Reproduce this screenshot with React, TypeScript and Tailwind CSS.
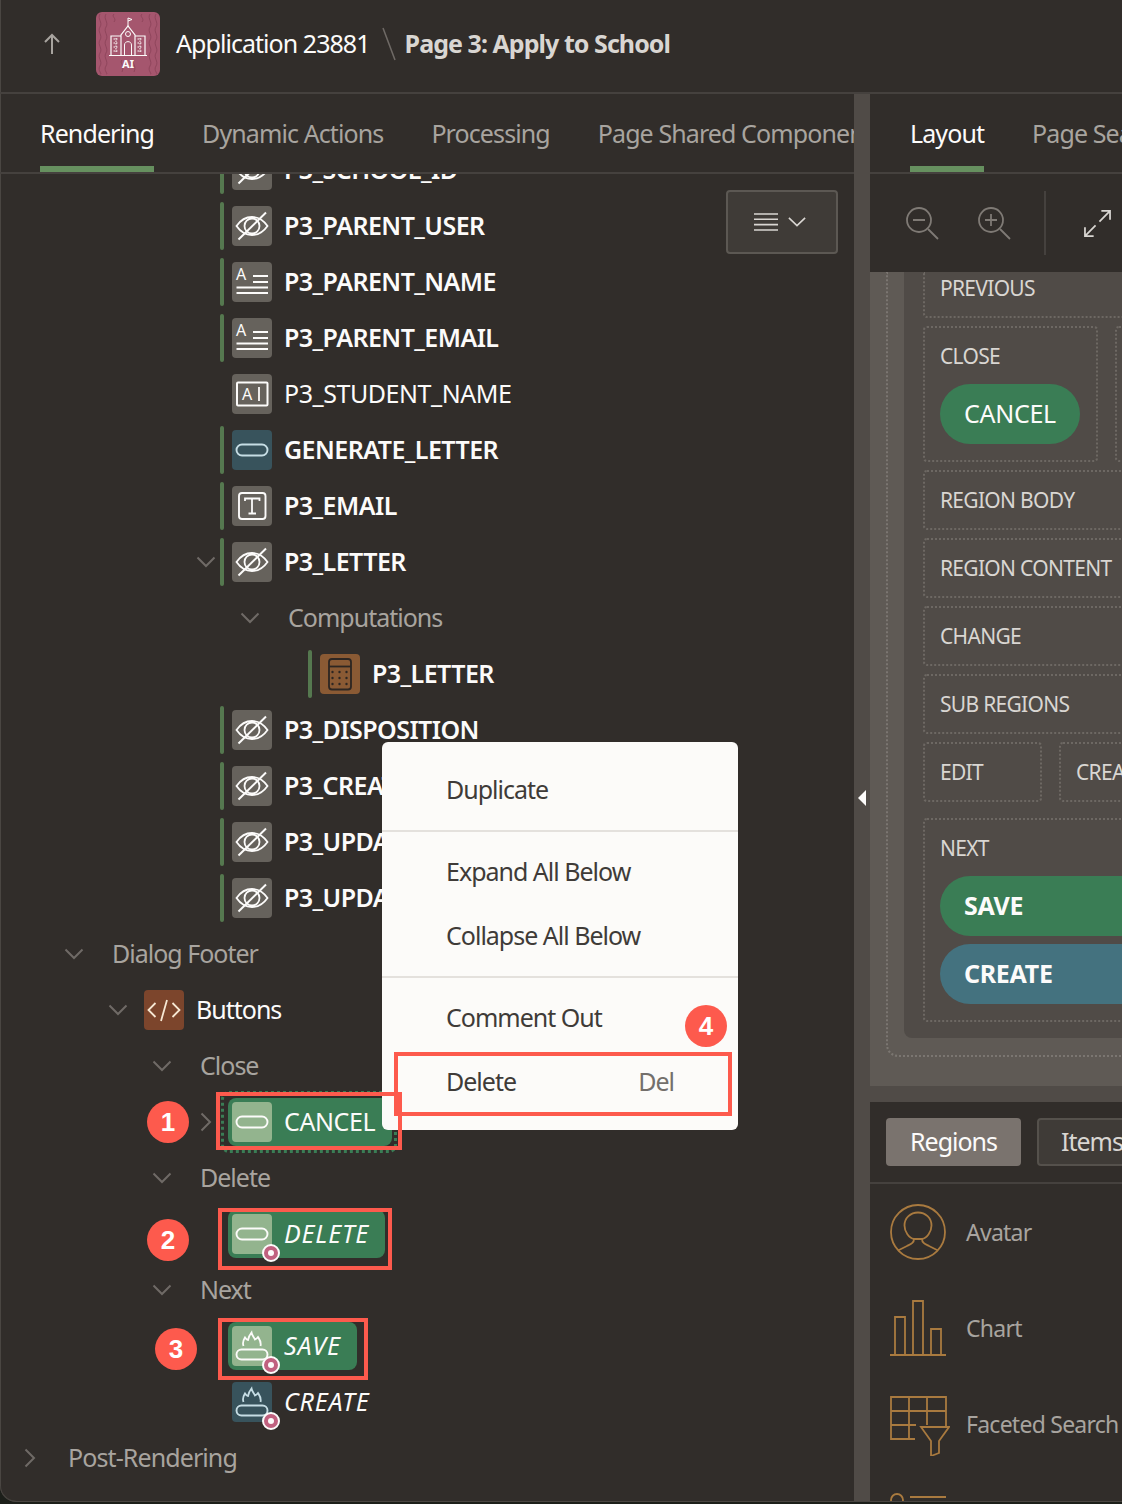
import type { ReactNode } from "react";

const font = "[font-family:'Noto_Sans',sans-serif]";

function Svg({ children, className = "w-10 h-10" }: { children: ReactNode; className?: string }) {
  return (
    <svg viewBox="0 0 40 40" fill="none" stroke="currentColor" strokeWidth="1.8" className={className}>
      {children}
    </svg>
  );
}

function EyeOff() {
  return (
    <Svg>
      <path d="M4.500 20C9 13.500 14 11 20 11s11 2.500 15.500 9C31 26.500 26 29 20 29S9 26.500 4.500 20Z" />
      <circle cx="20" cy="20" r="7.500" />
      <path d="M6.500 33.500 34 6.500" strokeWidth="2" />
    </Svg>
  );
}

function TextAreaIcon() {
  return (
    <Svg>
      <text x="4" y="18" fontSize="16" fill="currentColor" stroke="none" fontFamily="Noto Sans">A</text>
      <path d="M21 14h15M21 20h15M4.500 25.500H36M4.500 31H36" strokeWidth="2" />
    </Svg>
  );
}

function DisplayIcon() {
  return (
    <Svg>
      <rect x="5" y="8.500" width="30.500" height="23" rx="1" strokeWidth="2" />
      <text x="10" y="26" fontSize="16" fill="currentColor" stroke="none" fontFamily="Noto Sans">A</text>
      <path d="M27 13v14" />
    </Svg>
  );
}

function ButtonIcon() {
  return (
    <Svg>
      <rect x="4.500" y="14.500" width="31" height="11" rx="5.500" strokeWidth="1.900" />
    </Svg>
  );
}

function HotButtonIcon() {
  return (
    <Svg>
      <rect x="4.500" y="23.500" width="31" height="10" rx="5" strokeWidth="1.900" />
      <path d="M11.500 20C10 16 11.500 14 13 11.500c1 1.500 2 2.500 3 2.500.500-3 1.500-5 3.500-7.500.500 3 2.500 5 3.500 7 1.200-.500 2.200-1.500 3-2.500 2 3 3.500 5 2.500 9" />
    </Svg>
  );
}

function TextFieldIcon() {
  return (
    <Svg>
      <rect x="7" y="7" width="26.500" height="26" rx="3" strokeWidth="1.900" />
      <path d="M13 15v-2.500h14.500V15M20 12.500V27M16.500 27.500h7.500" />
    </Svg>
  );
}

function CalculatorIcon() {
  return (
    <svg viewBox="0 0 40 40" className="w-10 h-10" fill="none" stroke="#2d2622" strokeWidth="1.800">
      <rect x="9" y="5" width="22" height="30.500" rx="3" />
      <path d="M9 12.500h22" />
      <g fill="#2d2622" stroke="none">
        {[12.5, 19.5, 26.5].map((x) =>
          [18, 24, 30].map((y) => <circle key={`${x}-${y}`} cx={x} cy={y} r="1.200" />),
        )}
      </g>
    </svg>
  );
}

function CodeIcon() {
  return (
    <Svg>
      <path d="M11.500 13 4.500 20l7 7M28.500 13l7 7-7 7M23 10l-6 21" strokeWidth="1.800" />
    </Svg>
  );
}

function ChevronDown() {
  return (
    <svg viewBox="0 0 20 12" className="w-5 h-3" fill="none" stroke="#6f6a66" strokeWidth="2">
      <path d="M1.500 1.500 10 10l8.500-8.500" />
    </svg>
  );
}

function ChevronRight() {
  return (
    <svg viewBox="0 0 12 20" className="w-3 h-5" fill="none" stroke="#6f6a66" strokeWidth="2">
      <path d="M1.500 1.500 10 10l-8.500 8.500" />
    </svg>
  );
}

function Marker() {
  return (
    <span className="absolute -right-2 -bottom-2 w-[18px] h-[18px] rounded-full bg-[#c0617f] border-2 border-[#fcfbfa] flex items-center justify-center">
      <span className="w-[6px] h-[6px] rounded-full bg-[#fcfbfa]" />
    </span>
  );
}

const grey = "bg-[#66625c] text-[#fcfbfa]";
const teal = "bg-[#38535c] text-[#c6dde4]";
const sage = "bg-[#93b48e] text-[#fcfbfa]";

function Bar({ hidden }: { hidden?: boolean }) {
  return <span className={`w-1 h-12 rounded-sm mr-2 ml-0.5 ${hidden ? "" : "bg-[#55784f]"}`} />;
}

function Chevron({ open }: { open?: boolean }) {
  return (
    <span className="w-6 flex justify-center">
      {open === undefined ? null : open ? <ChevronDown /> : <ChevronRight />}
    </span>
  );
}

function Item({
  icon,
  tone = grey,
  label,
  light,
  open,
  indent = "pl-[194px]",
}: {
  icon: ReactNode;
  tone?: string;
  label: string;
  light?: boolean;
  open?: boolean;
  indent?: string;
}) {
  return (
    <div className={`h-14 flex items-center shrink-0 ${indent}`}>
      <Chevron open={open} />
      <Bar hidden={light} />
      <span className={`w-10 h-10 rounded ${tone} flex items-center justify-center`}>{icon}</span>
      <span className={`ml-3 text-[25px] text-[#fcfbfa] ${light ? "tracking-[-0.45px]" : "font-semibold tracking-[-0.55px]"}`}>{label}</span>
    </div>
  );
}

function Group({ label, open = true, indent }: { label: string; open?: boolean; indent: string }) {
  return (
    <div className={`h-14 flex items-center shrink-0 ${indent}`}>
      <Chevron open={open} />
      <span className="ml-[26px] text-[25px] tracking-[-1px] text-[#a8a49f]">{label}</span>
    </div>
  );
}

function ButtonRow({
  label,
  icon,
  tone = sage,
  pill,
  marker,
}: {
  label: string;
  icon: ReactNode;
  tone?: string;
  pill?: string;
  marker?: boolean;
}) {
  return (
    <div className="h-14 flex items-center shrink-0 pl-[194px]">
      <Chevron />
      <div className={`ml-2.5 h-12 pl-1 flex items-center rounded-lg ${pill ?? ""}`}>
        <span className={`relative w-10 h-10 rounded ${tone} flex items-center justify-center`}>
          {icon}
          {marker && <Marker />}
        </span>
        <span className="ml-3 text-[25px] tracking-[0.9px] italic text-[#fcfbfa]">{label}</span>
      </div>
    </div>
  );
}

function Tabs({ items, active }: { items: string[]; active: string }) {
  return (
    <div className="h-[80px] shrink-0 border-b-2 border-[#45413e] flex gap-12 pl-10 overflow-hidden whitespace-nowrap">
      {items.map((t) => (
        <div
          key={t}
          className={`h-[78px] pt-[22px] border-b-[6px] text-[25px] leading-[34px] tracking-[-0.9px] ${
            t === active ? "border-[#66905f] text-[#fcfbfa]" : "border-transparent text-[#a8a49f]"
          }`}
        >
          {t}
        </div>
      ))}
    </div>
  );
}

function Slot({ label, className = "" }: { label: string; className?: string }) {
  return (
    <div className={`border-2 border-dotted border-[#6d6863] rounded pl-[15px] pt-0.5 text-[21px] tracking-[-0.7px] text-[#d9d6d2] flex items-center shrink-0 ${className}`}>
      {label}
    </div>
  );
}

function Callout({ n, className }: { n: number; className: string }) {
  return (
    <div className={`absolute w-[42px] h-[42px] rounded-full bg-[#fd5a4d] text-white text-[26px] font-semibold flex items-center justify-center [font-family:'Liberation_Sans',sans-serif] ${className}`}>
      {n}
    </div>
  );
}

function RedBox({ className }: { className: string }) {
  return <div className={`absolute border-4 border-[#fd5a4d] ${className}`} />;
}

function MenuItem({ label, hint }: { label: string; hint?: string }) {
  return (
    <div className="h-16 pl-16 pr-[64px] flex items-center justify-between text-[25px] tracking-[-1px] text-[#3f3b38]">
      <span>{label}</span>
      {hint && <span className="text-[#736f6b]">{hint}</span>}
    </div>
  );
}

function PaletteRow({ icon, label }: { icon: ReactNode; label: string }) {
  return (
    <div className="h-24 shrink-0 flex items-center gap-5 pl-5 text-[#a97a3f]">
      {icon}
      <span className="text-[23px] tracking-[-0.75px] text-[#a8a49f] whitespace-nowrap">{label}</span>
    </div>
  );
}

function Logo() {
  return (
    <svg viewBox="0 0 64 64" className="w-16 h-16 rounded-md bg-[#a5566e] shrink-0" fill="none" stroke="#fcfbfa" strokeWidth="1">
      <path
        d="M4 2c-3 5 3 8 0 13s3 8 0 13 3 8 0 13 3 8 0 13 3 8 0 8M10 2c-3 5 3 8 0 13s3 8 0 13 3 8 0 13 3 8 0 13 3 8 0 8M54 2c-3 5 3 8 0 13s3 8 0 13 3 8 0 13 3 8 0 13 3 8 0 8M60 2c-3 5 3 8 0 13s3 8 0 13 3 8 0 13 3 8 0 13 3 8 0 8M18 2c-3 3 3 4 0 8M26 48c-3 3 3 5 0 12M38 48c-3 3 3 5 0 12M46 2c-3 3 3 4 0 8"
        stroke="#8f465c"
      />
      <path d="M32 14V6l4 1.500-4 1.500" />
      <path d="M25 43V23l7-9 7 9v20M15 43V24h10M49 43V24H39M13 43.500h38" strokeWidth="1.200" />
      <circle cx="32" cy="22" r="2.500" />
      <path d="M28.500 43V33c0-4.500 7-4.500 7 0v10" />
      <path d="M17.500 27h5M17.500 31h5M17.500 35h5M17.500 39h5M41.500 27h5M41.500 31h5M41.500 35h5M41.500 39h5M20 26v15M44 26v15" strokeDasharray="1.500 1" />
      <text x="32" y="56" fontSize="11" fontWeight="700" fill="#fcfbfa" stroke="none" textAnchor="middle" fontFamily="Noto Sans">AI</text>
    </svg>
  );
}

function ZoomIcon({ plus }: { plus?: boolean }) {
  return (
    <svg viewBox="0 0 34 34" className="w-[34px] h-[34px]" fill="none" stroke="#7f7a75" strokeWidth="1.800">
      <circle cx="14" cy="14" r="12" />
      <path d="m23 23 10 10M8 14h12" />
      {plus && <path d="M14 8v12" />}
    </svg>
  );
}

export default function App() {
  return (
    <div className={`relative w-[1122px] h-[1504px] bg-[#1c1f1a] overflow-hidden ${font}`}>
      <div className="h-[1502px] bg-[#312d2a] rounded-bl-2xl shadow-[inset_1px_0_0_#4a4642] border-b border-[#4a4642] flex flex-col overflow-hidden">
        {/* top bar */}
        <header className="h-[94px] shrink-0 border-b-2 border-[#45413e] flex items-center pl-10 pb-1 text-[25px]">
          <svg viewBox="0 0 24 24" className="w-6 h-6" fill="none" stroke="#a8a49f" strokeWidth="2">
            <path d="M12 22V3M5 10l7-7 7 7" />
          </svg>
          <div className="ml-8">
            <Logo />
          </div>
          <span className="ml-4 tracking-[-0.95px] text-[#fcfbfa]">Application 23881</span>
          <svg viewBox="0 0 14 34" className="w-[14px] h-[34px] ml-3" stroke="#6f6a66" strokeWidth="1.500">
            <path d="M1 1l12 32" />
          </svg>
          <span className="ml-[9px] font-bold tracking-[-0.95px] text-[#d9d6d2]">Page 3: Apply to School</span>
        </header>

        <div className="flex-1 flex min-h-0">
          {/* tree */}
          <section className="w-[854px] flex flex-col min-w-0">
            <Tabs items={["Rendering", "Dynamic Actions", "Processing", "Page Shared Components"]} active="Rendering" />
            <div className="relative flex-1 overflow-hidden">
              <div className="-mt-8 flex flex-col">
                <Item icon={<EyeOff />} label="P3_SCHOOL_ID" />
                <Item icon={<EyeOff />} label="P3_PARENT_USER" />
                <Item icon={<TextAreaIcon />} label="P3_PARENT_NAME" />
                <Item icon={<TextAreaIcon />} label="P3_PARENT_EMAIL" />
                <Item icon={<DisplayIcon />} label="P3_STUDENT_NAME" light />
                <Item icon={<ButtonIcon />} tone={teal} label="GENERATE_LETTER" />
                <Item icon={<TextFieldIcon />} label="P3_EMAIL" />
                <Item icon={<EyeOff />} label="P3_LETTER" open />
                <Group label="Computations" indent="pl-[238px]" />
                <Item icon={<CalculatorIcon />} tone="bg-[#8a5a34]" label="P3_LETTER" indent="pl-[282px]" />
                <Item icon={<EyeOff />} label="P3_DISPOSITION" />
                <Item icon={<EyeOff />} label="P3_CREATED_BY" />
                <Item icon={<EyeOff />} label="P3_UPDATED_ON" />
                <Item icon={<EyeOff />} label="P3_UPDATED_BY" />
                <Group label="Dialog Footer" indent="pl-[62px]" />
                <div className="h-14 flex items-center shrink-0 pl-[106px]">
                  <Chevron open />
                  <span className="ml-[14px] w-10 h-10 rounded bg-[#7c452c] text-[#f6e7d3] flex items-center justify-center">
                    <CodeIcon />
                  </span>
                  <span className="ml-3 text-[25px] tracking-[-1px] text-[#fcfbfa]">Buttons</span>
                </div>
                <Group label="Close" indent="pl-[150px]" />
                <div className="h-14 flex items-center shrink-0 pl-[194px]">
                  <Chevron open={false} />
                  <div className="ml-[3px] h-[62px] w-[176px] border-[3px] border-dotted border-[#3a7d55] rounded-lg flex items-center pl-1">
                    <div className="h-12 w-[164px] shrink-0 pl-1 flex items-center rounded-lg bg-[#3a7d55]">
                      <span className={`w-10 h-10 rounded ${sage} flex items-center justify-center`}>
                        <ButtonIcon />
                      </span>
                      <span className="ml-3 text-[25px] tracking-[-0.4px] text-[#fcfbfa]">CANCEL</span>
                    </div>
                  </div>
                </div>
                <Group label="Delete" indent="pl-[150px]" />
                <ButtonRow label="DELETE" icon={<ButtonIcon />} marker pill="bg-[#3a7d55] w-[157px]" />
                <Group label="Next" indent="pl-[150px]" />
                <ButtonRow label="SAVE" icon={<HotButtonIcon />} marker pill="bg-[#3a7d55] w-[129px]" />
                <ButtonRow label="CREATE" icon={<HotButtonIcon />} tone={teal} marker />
                <div className="h-14 flex items-center shrink-0 pl-[18px]">
                  <Chevron open={false} />
                  <span className="ml-[26px] text-[25px] tracking-[-0.9px] text-[#a8a49f]">Post-Rendering</span>
                </div>
              </div>
              <button className="absolute left-[726px] top-4 w-28 h-16 pr-1 rounded border-2 border-[#5c5853] bg-[#3f3b37] flex items-center justify-center gap-2.5 text-[#d9d6d2]">
                <svg viewBox="0 0 24 20" className="w-6 h-5" stroke="currentColor" strokeWidth="1.600">
                  <path d="M0 2h24M0 7.300h24M0 12.600h24M0 18h24" />
                </svg>
                <svg viewBox="0 0 20 12" className="w-[18px] h-3" fill="none" stroke="currentColor" strokeWidth="1.800">
                  <path d="M1 1.500 10 10l9-8.500" />
                </svg>
              </button>
            </div>
          </section>

          {/* splitter */}
          <div className="w-4 shrink-0 bg-[#504b47] flex items-center pl-1">
            <span className="w-0 h-0 border-y-8 border-y-transparent border-r-8 border-r-[#fcfbfa]" />
          </div>

          {/* layout side */}
          <section className="flex-1 flex flex-col min-w-0 overflow-hidden">
            <Tabs items={["Layout", "Page Search"]} active="Layout" />
            <div className="h-[98px] shrink-0 flex items-center pl-[35px] text-[#d9d6d2]">
              <ZoomIcon />
              <div className="ml-[38px]">
                <ZoomIcon plus />
              </div>
              <span className="ml-[33px] w-0.5 h-16 bg-[#45413e]" />
              <svg viewBox="0 0 28 28" className="ml-[38px] w-[27px] h-[27px]" fill="none" stroke="currentColor" strokeWidth="1.800">
                <path d="M16 12 27 1M18 1h9v9M12 16 1 27M1 18v9h9" />
              </svg>
            </div>

            <div className="h-[814px] shrink-0 bg-[#5f5a55] pl-4 pb-[29px] overflow-hidden">
              <div className="w-[400px] h-full border-l-2 border-b-2 border-dotted border-[#7b7671] rounded-bl-xl pl-4 pb-[17px]">
                <div className="h-full bg-[#504b47] rounded-bl-lg pl-[19px] flex flex-col">
                  <Slot label="PREVIOUS" className="w-[360px] h-[46px] border-t-0 rounded-t-none !pb-[13px]" />
                  <div className="mt-2 flex gap-[17px] shrink-0">
                    <div className="w-[175px] h-[136px] border-2 border-dotted border-[#6d6863] rounded pl-[15px] pt-[14px]">
                      <div className="text-[21px] leading-7 tracking-[-0.7px] text-[#d9d6d2]">CLOSE</div>
                      <div className="mt-[14px] w-[140px] h-[60px] rounded-full bg-[#3a7d55] flex items-center justify-center text-[25px] tracking-[-0.3px] text-[#fcfbfa]">
                        CANCEL
                      </div>
                    </div>
                    <div className="w-[150px] h-[136px] border-2 border-dotted border-[#6d6863] rounded" />
                  </div>
                  <div className="mt-2 flex flex-col gap-2 shrink-0">
                    <Slot label="REGION BODY" className="w-[360px] h-[60px]" />
                    <Slot label="REGION CONTENT" className="w-[360px] h-[60px]" />
                    <Slot label="CHANGE" className="w-[360px] h-[60px]" />
                    <Slot label="SUB REGIONS" className="w-[360px] h-[60px]" />
                  </div>
                  <div className="mt-2 flex gap-[17px] shrink-0">
                    <Slot label="EDIT" className="w-[119px] h-[60px]" />
                    <Slot label="CREATE" className="w-[150px] h-[60px]" />
                  </div>
                  <div className="mt-4 w-[360px] h-[204px] border-2 border-dotted border-[#6d6863] rounded pl-[15px] pt-[14px] shrink-0">
                    <div className="text-[21px] leading-7 tracking-[-0.7px] text-[#d9d6d2]">NEXT</div>
                    <div className="mt-[14px] h-[60px] rounded-l-full bg-[#3a7d55] flex items-center pl-6 text-[25px] font-bold tracking-[-0.3px] text-[#fcfbfa]">
                      SAVE
                    </div>
                    <div className="mt-2 h-[60px] rounded-l-full bg-[#44727f] flex items-center pl-6 text-[25px] font-bold tracking-[-0.3px] text-[#fcfbfa]">
                      CREATE
                    </div>
                  </div>
                </div>
              </div>
            </div>

            <div className="h-4 shrink-0 bg-[#504b47]" />

            {/* palette */}
            <div className="h-[82px] shrink-0 border-b-2 border-[#45413e] flex items-center gap-4 pl-4 text-[25px] tracking-[-1px] whitespace-nowrap">
              <div className="w-[135px] h-12 shrink-0 rounded bg-[#7a736e] text-[#fcfbfa] flex items-center justify-center">Regions</div>
              <div className="w-[135px] h-12 shrink-0 rounded border-2 border-[#55514c] bg-[#3f3b37] text-[#d9d6d2] pl-[22px] flex items-center">Items</div>
            </div>
            <div className="flex flex-col flex-1 overflow-hidden">
              <PaletteRow
                label="Avatar"
                icon={
                  <svg viewBox="0 0 56 56" className="w-14 h-14 shrink-0" fill="none" stroke="currentColor" strokeWidth="1.800">
                    <circle cx="28" cy="28" r="27" />
                    <path d="M28 8.500c-7.500 0-13.500 5.500-13.500 13 0 6 4.500 13 9.500 13.500h8c5-.5 9.500-7.500 9.500-13.500 0-7.500-6-13-13.500-13Z" />
                    <path d="M24 35c0 4-3 5-7 7l-9 4.500M32 35c0 4 3 5 7 7l9 4.500" />
                  </svg>
                }
              />
              <PaletteRow
                label="Chart"
                icon={
                  <svg viewBox="0 0 56 56" className="w-14 h-14 shrink-0" fill="none" stroke="currentColor" strokeWidth="1.800">
                    <path d="M0 55h56M5 55V17h10v38M23 55V1h10v54M41 55V29h10v26" />
                  </svg>
                }
              />
              <PaletteRow
                label="Faceted Search"
                icon={
                  <svg viewBox="0 0 60 60" className="w-[60px] h-[60px] shrink-0 -mr-1 mt-1" fill="none" stroke="currentColor" strokeWidth="1.800">
                    <path d="M25 43H1V1h55v30M1 15h55M1 29h25M19 1v42M37 1v28" />
                    <path d="M31 31h28L49 45v12l-8 3V45Z" />
                  </svg>
                }
              />
              <PaletteRow
                label=""
                icon={
                  <svg viewBox="0 0 56 56" className="w-14 h-14 shrink-0" fill="none" stroke="currentColor" strokeWidth="1.800">
                    <circle cx="7" cy="8" r="6" />
                    <path d="M20 5h36" />
                  </svg>
                }
              />
            </div>
          </section>
        </div>
      </div>

      {/* context menu */}
      <div className="absolute left-[382px] top-[742px] w-[356px] h-[388px] rounded-md bg-[#fcfbf9] py-4">
        <MenuItem label="Duplicate" />
        <div className="my-2 h-0.5 bg-[#e4e1dd]" />
        <MenuItem label="Expand All Below" />
        <MenuItem label="Collapse All Below" />
        <div className="my-2 h-0.5 bg-[#e4e1dd]" />
        <MenuItem label="Comment Out" />
        <MenuItem label="Delete" hint="Del" />
      </div>

      {/* annotations */}
      <RedBox className="left-[216px] top-[1092px] w-[186px] h-[58px]" />
      <RedBox className="left-[218px] top-[1208px] w-[174px] h-[62px]" />
      <RedBox className="left-[218px] top-[1318px] w-[150px] h-[62px]" />
      <RedBox className="left-[394px] top-[1052px] w-[338px] h-16" />
      <Callout n={1} className="left-[147px] top-[1101px]" />
      <Callout n={2} className="left-[147px] top-[1219px]" />
      <Callout n={3} className="left-[155px] top-[1328px]" />
      <Callout n={4} className="left-[685px] top-[1005px]" />
    </div>
  );
}
